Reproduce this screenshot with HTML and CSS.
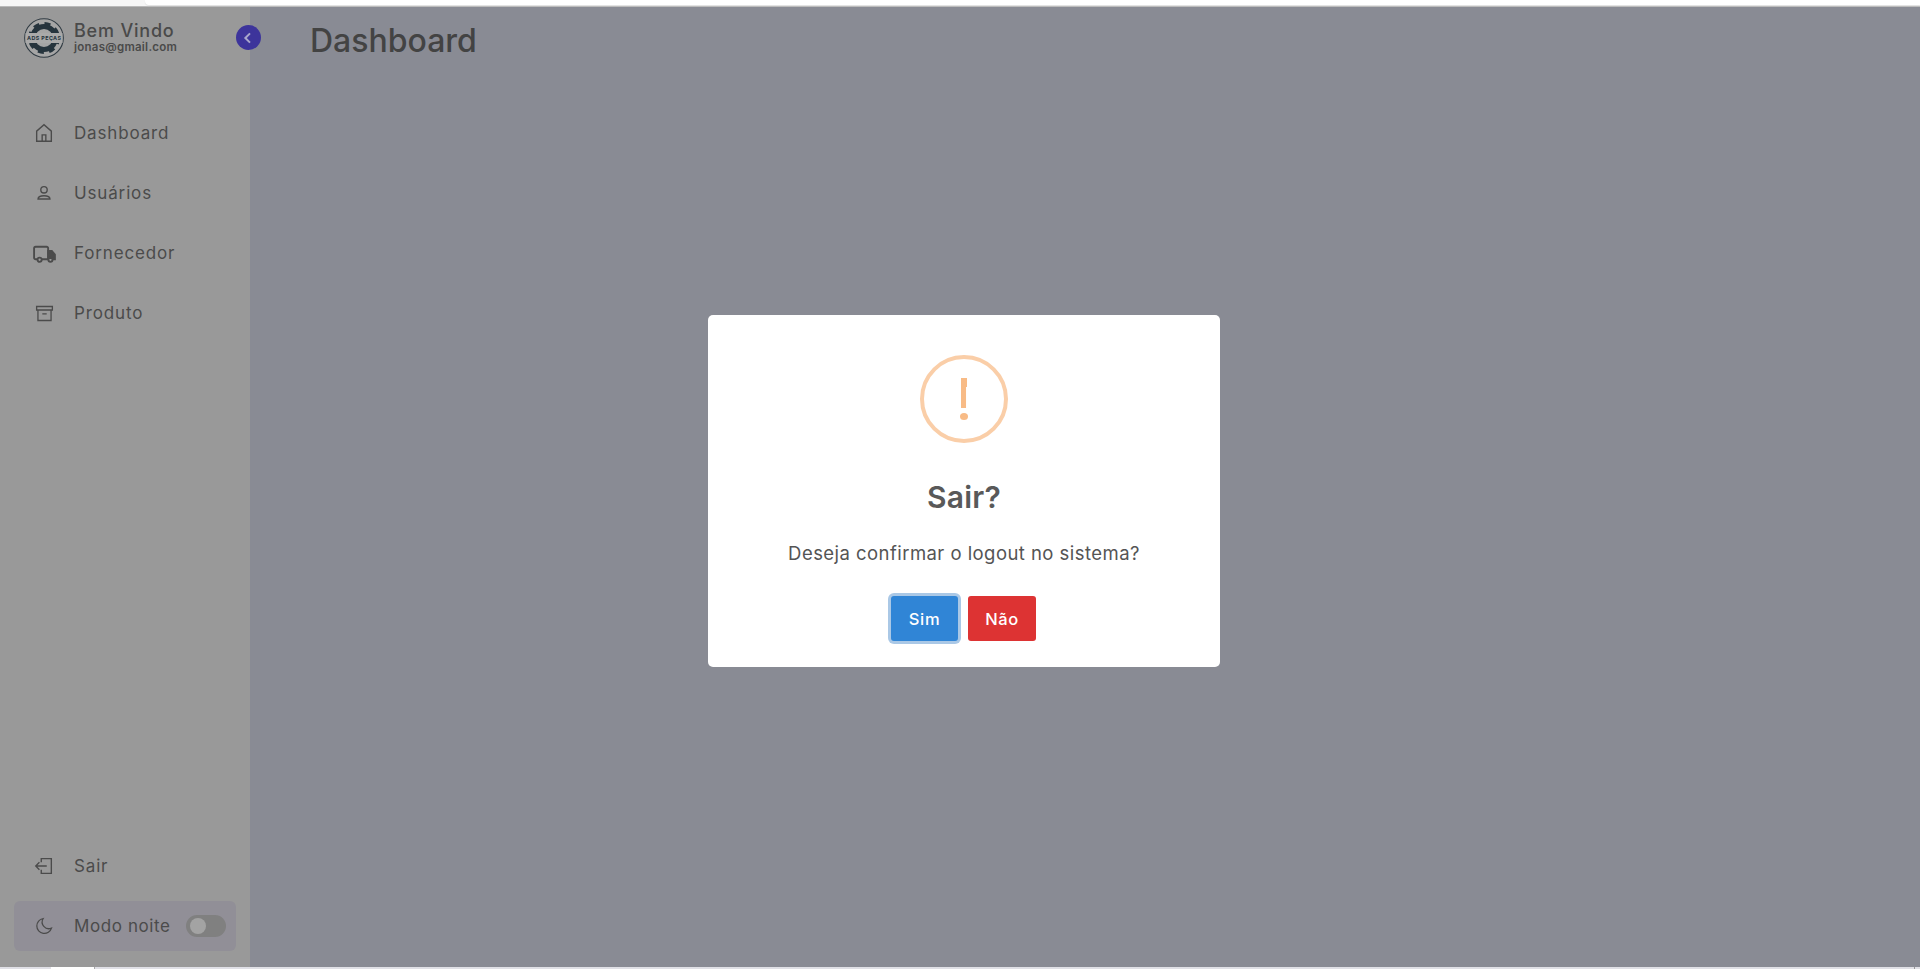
FILE: index.html
```html
<!DOCTYPE html>
<html lang="pt-BR">
<head>
<meta charset="utf-8">
<title>Dashboard</title>
<link rel="stylesheet" href="styles.css">
</head>
<body>
<div class="topstrip"><div class="tab"></div></div>
<div class="app">
  <aside class="sidebar">
    <div class="brand">
      <svg class="logo" viewBox="0 0 40 40" width="40" height="40">
        <circle cx="20" cy="20" r="19.300" fill="#a5a5a5" stroke="#2f3a42" stroke-width="1.100"/>
        <circle cx="20" cy="20" r="11.500" fill="none" stroke="#26343d" stroke-width="5"/>
        <circle cx="20" cy="20" r="14.500" fill="none" stroke="#26343d" stroke-width="3" stroke-dasharray="6 5.400"/>
        <rect x="1.500" y="15" width="37" height="10" fill="#a9a9a9"/>
        <text x="20" y="22.200" class="logo-text" text-anchor="middle" textLength="34" lengthAdjust="spacing">ADS PEÇAS</text>
      </svg>
      <div class="brand-text">
        <div class="brand-name">Bem Vindo</div>
        <div class="brand-mail">jonas@gmail.com</div>
      </div>
    </div>
    <nav class="menu">
      <a class="item"><span class="ico"><svg viewBox="0 0 24 24" width="22" height="22"><path d="M4 21V10l8-7 8 7v11zM10 21v-7h4v7"/></svg></span>Dashboard</a>
      <a class="item"><span class="ico"><svg viewBox="0 0 24 24" width="22" height="22"><circle cx="12" cy="8.500" r="3.500"/><path d="M5.500 18.500c0-2.500 2.500-3.500 6.500-3.500s6.500 1 6.500 3.500z"/></svg></span>Usuários</a>
      <a class="item"><span class="ico"><svg class="truck" viewBox="0 0 24 24" width="25" height="25"><path d="M5 17.500H3.500A1.500 1.500 0 0 1 2 16V7a1.500 1.500 0 0 1 1.500-1.500h10.500a1.500 1.500 0 0 1 1.500 1.500v10.500H9.500"/><path class="solid" d="M15.500 9.500h3.500l3 3.500v4.500h-2v-1h-4.500z"/><circle cx="7.300" cy="18" r="2"/><circle cx="17.700" cy="18" r="2"/></svg></span>Fornecedor</a>
      <a class="item"><span class="ico"><svg viewBox="0 0 24 24" width="21" height="21"><path d="M3 4h18v4H3zM4.500 8v12h15V8M9.500 12.500h5"/></svg></span>Produto</a>
    </nav>
    <div class="bottom">
      <a class="item"><span class="ico"><svg viewBox="0 0 24 24" width="22" height="22"><path d="M9 8V4h11v16H9v-4M15 12H3M7 8l-4 4 4 4"/></svg></span>Sair</a>
      <div class="night">
        <span class="ico"><svg viewBox="0 0 24 24" width="20" height="20"><path d="M11 3a9 9 0 1 0 10 11.500A8 8 0 0 1 11 3z"/></svg></span>
        <span class="night-label">Modo noite</span>
        <span class="switch"><span class="knob"></span></span>
      </div>
    </div>
    <button class="collapse" aria-label="Recolher"><svg viewBox="0 0 24 24" width="16" height="16"><path d="M15 5l-7 7 7 7"/></svg></button>
  </aside>
  <main class="content">
    <h1 class="title">Dashboard</h1>
  </main>
</div>
<div class="bottomstrip"><div class="bottom-tab"></div><div class="bottom-tick"></div></div>
<div class="overlay">
  <div class="dialog">
    <div class="warn"><span class="warn-bar"></span><span class="warn-dot"></span></div>
    <h2 class="dialog-title">Sair?</h2>
    <p class="dialog-text">Deseja confirmar o logout no sistema?</p>
    <div class="actions">
      <button class="btn yes">Sim</button>
      <button class="btn no">Não</button>
    </div>
  </div>
</div>
</body>
</html>
```
FILE: styles.css
```css
* { box-sizing: border-box; }
html, body { margin: 0; height: 100%; overflow: hidden; }
body { font-family: Inter, "Liberation Sans", sans-serif; background: #e0e0e6; display: flex; flex-direction: column; color: #4b4b4b; }
.topstrip { height: 7px; flex: none; background: #f6f6f6; border-bottom: 1px solid #b9b9b9; }
.tab { height: 5px; margin-left: 145px; background: #fff; border-bottom-left-radius: 4px; box-shadow: 0 1px 1px #e2e2e2; }
.app { flex: 1; display: flex; min-height: 0; background: #898b94; }
.sidebar { position: relative; width: 250px; flex: none; background: #999; display: flex; flex-direction: column; padding: 0 14px; }
.brand { display: flex; align-items: center; gap: 10px; height: 40px; margin: 11px 0 0 10px; }
.logo { flex: none; }
.logo-text { font-size: 5.400px; font-weight: 700; fill: #26343d; }
.brand-text { line-height: 1; }
.brand-name { font-size: 18px; font-weight: 500; letter-spacing: 0.8px; color: #4a4a4a; line-height: 20px; margin-top: -2px; white-space: nowrap; }
.brand-mail { font-size: 11.500px; font-weight: 600; letter-spacing: 0.25px; color: #4a4a4a; line-height: 13px; white-space: nowrap; }
.menu { margin-top: 60px; display: flex; flex-direction: column; gap: 30px; }
.item { display: flex; align-items: center; height: 30px; font-size: 17px; letter-spacing: 0.85px; color: #4b4b4b; }
.ico { width: 30px; height: 30px; margin-left: 15px; margin-right: 15px; flex: none; display: flex; align-items: center; justify-content: center; }
.ico svg { fill: none; stroke: #4b4b4b; stroke-width: 1.500; }
.ico svg.truck { stroke-width: 1.800; }
.ico svg .solid { fill: #4b4b4b; }
.bottom { margin-top: auto; margin-bottom: 16px; display: flex; flex-direction: column; }
.night { display: flex; align-items: center; height: 50px; margin-top: 20px; border-radius: 6px; background: #918f97; width: 222px; font-size: 17px; color: #4b4b4b; }
.night-label { flex: 1; letter-spacing: 0.6px; white-space: nowrap; }
.switch { width: 40px; height: 22px; border-radius: 11px; background: #808080; margin-right: 10px; padding: 3px 4px; flex: none; }
.knob { display: block; width: 16px; height: 16px; border-radius: 50%; background: #a3a3a3; }
.collapse { position: absolute; right: -11px; top: 18px; width: 25px; height: 25px; padding: 0 2px 0 0; border: 0; border-radius: 50%; background: #3d349b; display: flex; align-items: center; justify-content: center; }
.collapse svg { fill: none; stroke: #aaa8cc; stroke-width: 3; }
.content { flex: 1; padding: 0 60px; }
.title { margin: 0; font-size: 32px; font-weight: 500; line-height: 40px; padding-top: 14px; color: #434343; }
.bottomstrip { height: 2px; flex: none; background: #e0e0e6; display: flex; justify-content: space-between; }
.bottom-tab { height: 2px; width: 44px; margin-left: 51px; background: #fff; border-right: 1px solid #aaa; }
.bottom-tick { height: 2px; width: 1px; margin-right: 5px; background: #999; }
.overlay { position: fixed; inset: 7px 0 2px 0; display: flex; justify-content: center; padding-top: 308px; padding-left: 8px; }
.dialog { width: 512px; height: 352px; background: #fff; border-radius: 5px; display: flex; flex-direction: column; align-items: center; padding-top: 40px; }
.warn { width: 88px; height: 88px; border-radius: 50%; border: 4px solid #facea8; display: flex; flex-direction: column; align-items: center; padding-top: 19px; flex: none; }
.warn-bar { width: 6px; height: 30px; background: #f8bb86; display: block; clip-path: polygon(0 0, 100% 0, 100% 30%, 84% 30%, 84% 100%, 0 100%); }
.warn-dot { width: 8px; height: 7px; margin-top: 5px; border-radius: 50%; background: #f8bb86; display: block; }
.dialog-title { margin: 34px 0 0; font-size: 30px; line-height: 40px; font-weight: 600; letter-spacing: 0.25px; color: #595959; }
.dialog-text { margin: 23px 0 0; font-size: 18.500px; line-height: 27px; font-weight: 400; letter-spacing: 0.45px; color: #545454; }
.actions { display: flex; gap: 10px; margin-top: 29px; margin-right: 1px; }
.btn { width: 68px; height: 45px; border: 0; border-radius: 3px; color: #fff; font-family: inherit; font-size: 16.500px; font-weight: 500; letter-spacing: 0.6px; padding: 0; }
.yes { width: 67px; background: #3085d6; box-shadow: 0 0 0 3px #aac8e6; }
.no { background: #dd3333; }
```
